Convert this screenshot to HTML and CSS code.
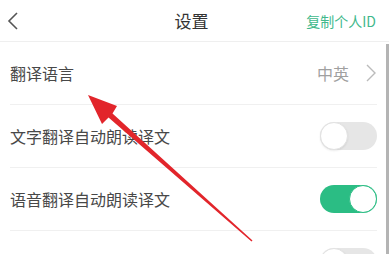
FILE: index.html
```html
<!DOCTYPE html>
<html lang="zh-CN">
<head>
  <meta charset="UTF-8" />
  <title>设置</title>
  <link rel="stylesheet" href="styles.css">
</head>
<body>
  <div class="page">
    <header class="top-bar">
      <div class="back">
        <svg width="12" height="18" viewBox="0 0 12 18"><path d="M10 1 L2 9 L10 17" fill="none" stroke="#555" stroke-width="1.6"/></svg>
      </div>
      <h1>设置</h1>
      <a class="copy-id">复制个人ID</a>
    </header>

    <div class="settings">
      <div class="row">
        <span class="label">翻译语言</span>
        <span class="value">中英
          <svg width="12" height="18" viewBox="0 0 12 18"><path d="M2 1 L10 9 L2 17" fill="none" stroke="#bbb" stroke-width="1.4"/></svg>
        </span>
      </div>
      <div class="row">
        <span class="label">文字翻译自动朗读译文</span>
        <span class="switch"></span>
      </div>
      <div class="row">
        <span class="label">语音翻译自动朗读译文</span>
        <span class="switch on"></span>
      </div>
      <div class="row">
        <span class="label"></span>
        <span class="switch"></span>
      </div>
    </div>

    <!-- scroll bar at the right edge -->
    <div class="scrollbar"></div>

    <!-- red arrow drawn over the list -->
    <svg class="arrow" width="389" height="254" viewBox="0 0 389 254">
      <polygon points="88,95 117,106 112.5,113.5 252.5,240.5 251.5,241.5 108.5,117.5 102,124" fill="#e2252b"/>
    </svg>
  </div>
</body>
</html>
```

FILE: styles.css
```css
body {
  margin: 0;
  font-family: "Noto Sans CJK SC", "Noto Sans", sans-serif;
  background-color: #fff;
  overflow: hidden;
}

.page {
  position: relative;
  width: 389px;
  height: 254px;
  overflow: hidden;
}

.top-bar {
  display: grid;
  grid-template-columns: 1fr auto 1fr;
  align-items: center;
  height: 41px;
  border-bottom: 1px solid #efefef;
  padding: 0 13px 0 7px;
}

.back {
  display: flex;
  align-items: center;
  padding-top: 1px;
}

.top-bar h1 {
  margin: 0;
  font-size: 17px;
  font-weight: normal;
  color: #333;
}

.copy-id {
  justify-self: end;
  font-size: 14px;
  color: #40b88b;
}

.row {
  display: flex;
  align-items: center;
  justify-content: space-between;
  box-sizing: border-box;
  height: 63px;
  margin: 0 12px 0 10px;
  border-bottom: 1px solid #f0f0f0;
}

.label {
  font-size: 16px;
  color: #484848;
}

.value {
  display: flex;
  align-items: center;
  gap: 16px;
  font-size: 16px;
  color: #a0a0a0;
}

.switch {
  position: relative;
  width: 57px;
  height: 28px;
  border-radius: 14px;
  background: #e6e6e6;
}

.switch::after {
  content: "";
  position: absolute;
  left: 0;
  top: 0;
  width: 26px;
  height: 26px;
  border-radius: 50%;
  background: #fff;
  border: 1px solid #e2e2e2;
  box-shadow: 0 1px 2px rgba(0,0,0,0.08);
}

.switch.on {
  background: #2bbd84;
}

.switch.on::after {
  left: auto;
  right: 0;
  border-color: #2bbd84;
  box-shadow: none;
}

.scrollbar {
  position: absolute;
  right: 0;
  top: 44px;
  width: 3px;
  bottom: 0;
  background: #b4b4b4;
}

.arrow {
  position: absolute;
  left: 0;
  top: 0;
}
```
